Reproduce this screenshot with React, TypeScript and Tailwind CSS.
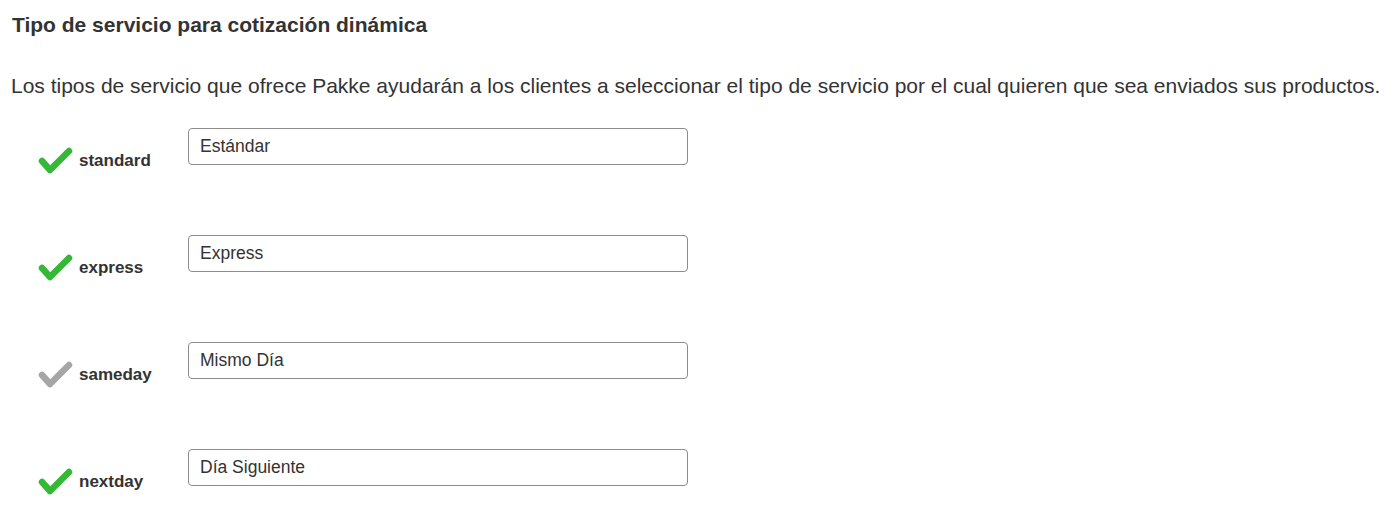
import React from "react";

const services = [
  { key: "standard", label: "Estándar", active: true },
  { key: "express", label: "Express", active: true },
  { key: "sameday", label: "Mismo Día", active: false },
  { key: "nextday", label: "Día Siguiente", active: true },
];

const Check: React.FC<{ active: boolean }> = ({ active }) => (
  <svg width="36" height="30" viewBox="0 0 36 30" className="shrink-0">
    <polyline
      points="5,15 13,24 32,5"
      fill="none"
      stroke={active ? "#35b835" : "#a6a6a6"}
      strokeWidth="6.5"
      strokeLinecap="round"
      strokeLinejoin="round"
    />
  </svg>
);

export default function App() {
  return (
    <div className="min-h-screen bg-white px-[12px] pt-[12px] font-['Liberation_Sans',Arial,sans-serif] text-[#333]">
      <h2 className="text-[21px] font-bold leading-[26px]">
        Tipo de servicio para cotización dinámica
      </h2>
      <p className="mt-[35px] -ml-px whitespace-nowrap text-[21px] leading-[26px]">
        Los tipos de servicio que ofrece Pakke ayudarán a los clientes a seleccionar el tipo de servicio por el
        cual quieren que sea enviados sus productos.
      </p>
      <div className="mt-[29px] flex flex-col gap-[61px] pl-[25px]">
        {services.map((s) => (
          <div key={s.key} className="flex items-start">
            <div className="mt-[20px] flex h-[26px] w-[151px] items-center gap-[6px]">
              <Check active={s.active} />
              <span className="text-[17px] font-bold">{s.key}</span>
            </div>
            <input
              readOnly
              value={s.label}
              className="h-[37px] w-[500px] rounded-[4px] border border-[#8c8c8c] px-[11px] text-[17.5px] text-[#333] outline-none"
            />
          </div>
        ))}
      </div>
    </div>
  );
}
